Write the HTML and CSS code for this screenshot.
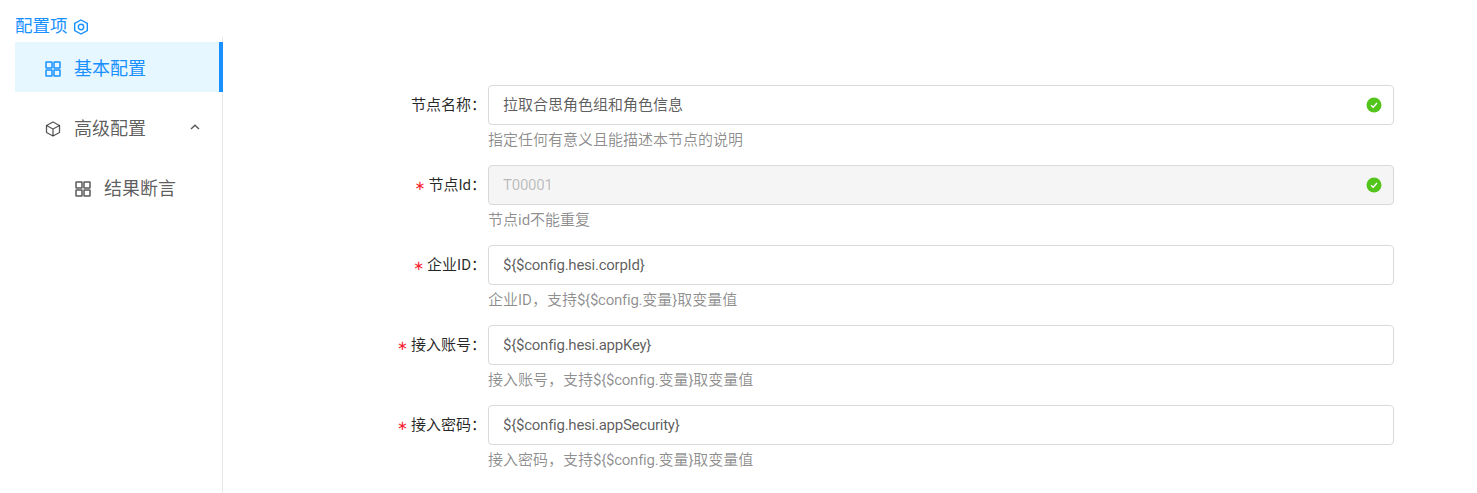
FILE: index.html
```html
<!DOCTYPE html>
<html lang="zh-CN">
<head>
<meta charset="utf-8">
<title>配置项</title>
<link rel="stylesheet" href="styles.css">
</head>
<body>
<div class="page">
  <aside class="side">
    <div class="side-title">配置项
      <svg class="hex" viewBox="0 0 16 16" width="16" height="16"><path d="M8 1 14.300 4.500v7L8 15l-6.300-3.500v-7z" fill="none" stroke="currentColor" stroke-width="1.400"/><circle cx="8" cy="8" r="2.700" fill="none" stroke="currentColor" stroke-width="1.400"/></svg>
    </div>
    <nav class="menu">
      <div class="menu-item active">
        <svg class="ico" viewBox="0 0 16 16" width="16" height="16"><g fill="none" stroke="currentColor" stroke-width="1.500"><rect x="1" y="1" width="6" height="6" rx=".5"/><rect x="9" y="1" width="6" height="6" rx=".5"/><rect x="1" y="9" width="6" height="6" rx=".5"/><rect x="9" y="9" width="6" height="6" rx=".5"/></g></svg>
        <span>基本配置</span>
      </div>
      <div class="menu-item">
        <svg class="ico" viewBox="0 0 16 16" width="16" height="16"><g fill="none" stroke="currentColor" stroke-width="1.300" stroke-linejoin="round"><path d="M8 1 14.500 4.500v7L8 15l-6.500-3.500v-7z"/><path d="M1.500 4.500 8 8l6.500-3.500M8 8v7"/></g></svg>
        <span>高级配置</span>
        <svg class="caret" viewBox="0 0 10 6" width="10" height="6"><path d="M1 5 5 1.300 9 5" fill="none" stroke="currentColor" stroke-width="1.500"/></svg>
      </div>
      <div class="menu-item sub">
        <svg class="ico" viewBox="0 0 16 16" width="16" height="16"><g fill="none" stroke="currentColor" stroke-width="1.500"><rect x="1" y="1" width="6" height="6" rx=".5"/><rect x="9" y="1" width="6" height="6" rx=".5"/><rect x="1" y="9" width="6" height="6" rx=".5"/><rect x="9" y="9" width="6" height="6" rx=".5"/></g></svg>
        <span>结果断言</span>
      </div>
    </nav>
  </aside>
  <main class="form">
    <div class="row">
      <label class="label">节点名称</label>
      <div class="control">
        <div class="input">拉取合思角色组和角色信息<span class="ok"><svg viewBox="0 0 16 16" width="16" height="16"><circle cx="8" cy="8" r="7.500" fill="#52c41a"/><path d="M5 8.200 7.200 10.300 11 6" fill="none" stroke="#fff" stroke-width="1.400"/></svg></span></div>
        <div class="help">指定任何有意义且能描述本节点的说明</div>
      </div>
    </div>
    <div class="row">
      <label class="label req">节点Id</label>
      <div class="control">
        <div class="input disabled"><span class="latin">T00001</span><span class="ok"><svg viewBox="0 0 16 16" width="16" height="16"><circle cx="8" cy="8" r="7.500" fill="#52c41a"/><path d="M5 8.200 7.200 10.300 11 6" fill="none" stroke="#fff" stroke-width="1.400"/></svg></span></div>
        <div class="help">节点id不能重复</div>
      </div>
    </div>
    <div class="row">
      <label class="label req">企业ID</label>
      <div class="control">
        <div class="input"><span class="latin">${$config.hesi.corpId}</span></div>
        <div class="help">企业ID，支持<span class="latin">${$config.</span>变量<span class="latin">}</span>取变量值</div>
      </div>
    </div>
    <div class="row">
      <label class="label req">接入账号</label>
      <div class="control">
        <div class="input"><span class="latin">${$config.hesi.appKey}</span></div>
        <div class="help">接入账号，支持<span class="latin">${$config.</span>变量<span class="latin">}</span>取变量值</div>
      </div>
    </div>
    <div class="row">
      <label class="label req">接入密码</label>
      <div class="control">
        <div class="input"><span class="latin">${$config.hesi.appSecurity}</span></div>
        <div class="help">接入密码，支持<span class="latin">${$config.</span>变量<span class="latin">}</span>取变量值</div>
      </div>
    </div>
  </main>
</div>
</body>
</html>
```
FILE: styles.css
```css
* { box-sizing: border-box; }
html, body { margin: 0; height: 100%; background: #fff; overflow: hidden; }
body {
  font-family: Roboto, "Noto Sans CJK SC", sans-serif;
  font-size: 15px;
  color: rgba(0, 0, 0, .65);
}
.page { display: flex; height: 493px; padding: 15px 0 0 15px; }
.side { width: 208px; flex: none; display: flex; flex-direction: column; }
.side-title {
  height: 22px; line-height: 22px; font-size: 17.500px; color: #1890ff;
  display: flex; align-items: center; gap: 5px;
}
.hex { margin-top: 1px; }
.menu { flex: 1; border-right: 1px solid #e8e8e8; padding-top: 5px; }
.menu-item {
  height: 50px; display: flex; align-items: center; padding-left: 30px;
  font-size: 18px; color: rgba(0, 0, 0, .65); margin-bottom: 10px; position: relative;
}
.menu-item span { margin-left: 13px; }
.menu-item.active { background: #e6f7ff; color: #1890ff; margin-right: -1px; border-right: 4px solid #1890ff; }
.menu-item.sub { padding-left: 60px; }
.caret { position: absolute; right: 22px; top: 22px; color: rgba(0,0,0,.65); }
.ico { flex: none; margin-top: 3px; }
.form { flex: 1; padding: 70px 83px 0 0; display: flex; flex-direction: column; }
.row { display: flex; height: 80px; }
.label {
  width: 265px; flex: none; height: 40px; line-height: 40px; text-align: right; padding-right: 9px;
  color: rgba(0, 0, 0, .85);
}
.label::after { content: "："; margin-right: -1px; display: inline-block; width: 9px; text-align: left; }
.label.req::before {
  content: "∗"; color: #f5222d; margin-right: 3px; font-size: 13px; font-family: "DejaVu Sans", sans-serif;
}
.control { flex: 1; min-width: 0; }
.input {
  height: 40px; line-height: 38px; border: 1px solid #d9d9d9; border-radius: 4px;
  padding: 0 14px; position: relative; background: #fff;
}
.input.disabled { background: #f5f5f5; color: rgba(0, 0, 0, .25); }
.latin { letter-spacing: -.25px; }
.ok { position: absolute; right: 11px; top: 11px; height: 16px; display: block; }
.ok svg { display: block; }
.help { height: 30px; line-height: 30px; color: rgba(0, 0, 0, .45); }
```
